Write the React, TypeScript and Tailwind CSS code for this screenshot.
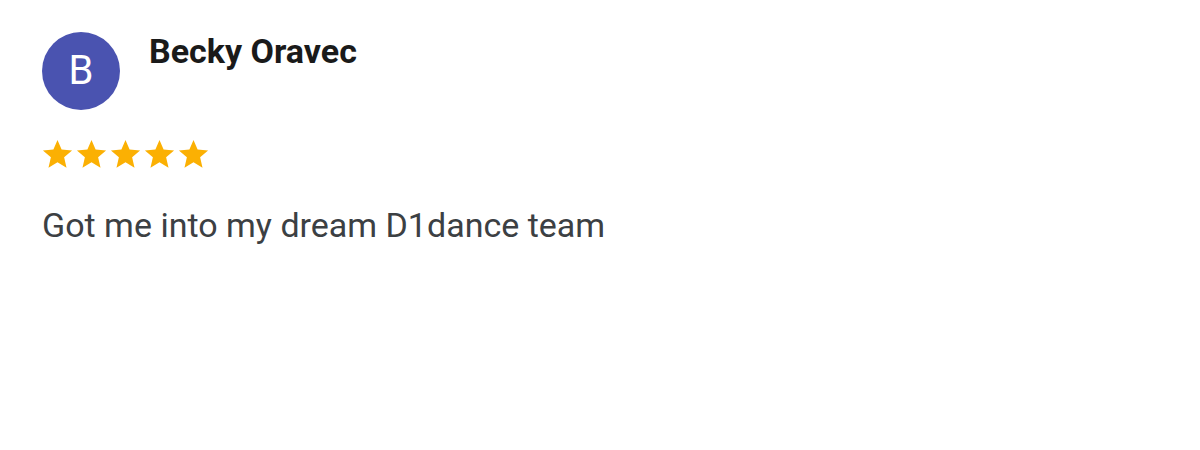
const Star = () => (
  <svg viewBox="0 0 24 24" className="w-[35px] h-[35px] -mx-[0.5px]" fill="#fbb003">
    <path d="M12 17.27L18.18 21l-1.64-7.03L22 9.24l-7.19-.61L12 2 9.19 8.63 2 9.24l5.46 4.73L5.82 21z" />
  </svg>
);

export default function App() {
  return (
    <div className="w-[1200px] h-[450px] bg-white font-['Roboto',sans-serif] px-[42px] pt-[32px]">
      <div className="flex items-start gap-[29px]">
        <div className="w-[78px] h-[78px] rounded-full bg-[#4a53b0] flex items-center justify-center text-white text-[40px] leading-none">
          B
        </div>
        <div className="text-[34px] font-bold text-[#1a1a1a] leading-none pt-[2px]">Becky Oravec</div>
      </div>
      <div className="flex mt-[27px] -ml-[2px]">
        <Star />
        <Star />
        <Star />
        <Star />
        <Star />
      </div>
      <p className="mt-[36px] text-[34px] text-[#3c4043] leading-none">Got me into my dream D1dance team</p>
    </div>
  );
}
